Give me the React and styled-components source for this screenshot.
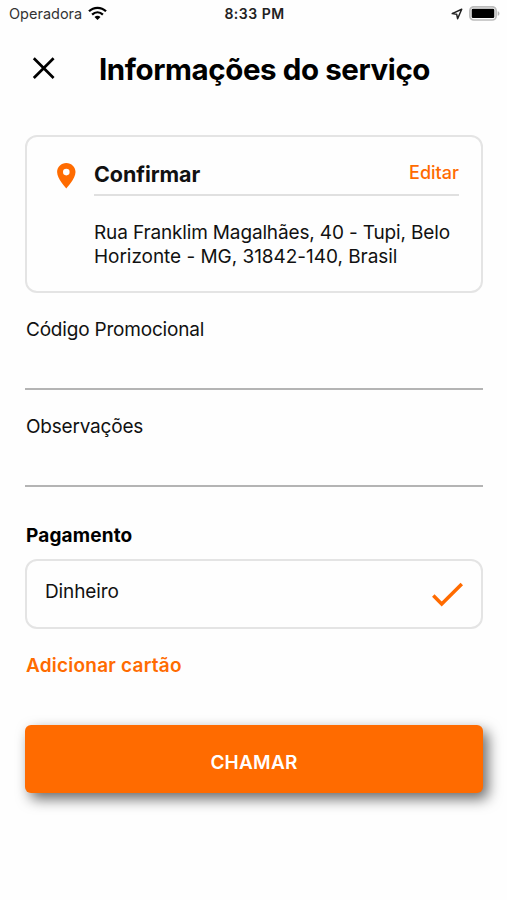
import React from 'react';
import styled, { createGlobalStyle } from 'styled-components';

const ORANGE = '#ff6b00';

const GlobalStyle = createGlobalStyle`
  * { box-sizing: border-box; }
  body { margin: 0; background: #fefefe; }
  button { border: 0; padding: 0; background: none; font: inherit; color: inherit; cursor: pointer; }
`;

const Screen = styled.main`
  width: 507px;
  height: 900px;
  overflow: hidden;
  background: #fefefe;
  color: #111;
  font-family: Inter, "Liberation Sans", sans-serif;
`;

const Text = styled.span`
  display: block;
  white-space: nowrap;
  font-size: ${(p) => p.$size}px;
  line-height: ${(p) => p.$line || 24}px;
  font-weight: ${(p) => p.$weight || 400};
  letter-spacing: ${(p) => p.$track || 0}px;
  color: ${(p) => p.$color || 'inherit'};
`;

const Title = styled(Text).attrs({ as: 'h1' })`
  margin: 0;
`;

const StatusBar = styled.div`
  display: grid;
  grid-template-columns: 1fr auto 1fr;
  align-items: center;
  height: 27px;
  padding: 0 7px 0 9px;
`;

const StatusGroup = styled.div`
  display: flex;
  align-items: center;
  gap: ${(p) => p.$gap}px;
  justify-content: ${(p) => (p.$end ? 'flex-end' : 'flex-start')};
`;

const Header = styled.header`
  display: flex;
  align-items: center;
  height: 83px;
  padding-left: 32px;
  gap: 43px;
`;

const CloseButton = styled.button`
  display: flex;
  width: 24px;
  height: 24px;
  margin-top: -2px;
`;

const Content = styled.section`
  padding: 25px 24px 0 25px;
`;

const AddressCard = styled.section`
  display: flex;
  height: 158px;
  padding: 25px 22px 0 29px;
  gap: 17px;
  border: 2px solid #e4e4e4;
  border-radius: 12px;
`;

const PinBox = styled.div`
  display: flex;
  flex: none;
  width: 21px;
  height: 27px;
`;

const AddressBody = styled.div`
  flex: 1;
`;

const AddressHead = styled.div`
  display: flex;
  justify-content: space-between;
  height: 34px;
  border-bottom: 2px solid #e0e0e0;
`;

const EditButton = styled.button`
  display: block;
  height: 20px;
`;

const AddressText = styled.div`
  padding-top: 25px;
`;

const Field = styled.label`
  display: block;
  height: 97px;
  padding-top: 25px;
`;

const FieldInput = styled.input`
  display: block;
  width: 100%;
  height: 48px;
  padding: 0;
  border: 0;
  border-bottom: 2px solid #b4b4b4;
  border-radius: 0;
  outline: 0;
  background: transparent;
  font: inherit;
`;

const Label = styled(Text)`
  padding-left: 1px;
`;

const PaymentTitle = styled.h2`
  margin: 0;
  padding: 37px 0 11px;
`;

const PaymentOption = styled.button`
  && {
    display: flex;
    justify-content: space-between;
    width: 100%;
    height: 70px;
    padding: 18px 17px 0 18px;
    border: 2px solid #e4e4e4;
    border-radius: 12px;
  }
`;

const CheckBox = styled.span`
  display: flex;
  width: 32px;
  height: 25px;
  margin-top: 3px;
`;

const AddCard = styled.button`
  display: block;
  margin-top: 25px;
`;

const SubmitButton = styled.button`
  && {
    display: flex;
    align-items: center;
    justify-content: center;
    width: 100%;
    height: 68px;
    margin-top: 47px;
    padding-top: 8px;
    border-radius: 6px;
    background: ${ORANGE};
    box-shadow: 5px 6px 14px rgba(0, 0, 0, 0.58);
  }
`;

const WifiIcon = () => (
  <svg width="19" height="15" viewBox="0 0 19 15" fill="none" stroke="#000" strokeWidth="2.3">
    <path d="M1 5.3C5.8.6 13.2.6 18 5.3" />
    <path d="M4.1 8.6c3.2-3 7.6-3 10.8 0" />
    <path d="M6.5 10.9c1.8-1.6 4.2-1.6 6 0L9.5 14z" fill="#000" stroke="none" />
  </svg>
);

const LocationIcon = () => (
  <svg width="12" height="12" viewBox="0 0 12 12" fill="none" stroke="#222" strokeWidth="1.5" strokeLinejoin="round">
    <path d="M10.7 1.3 1.2 5.6l4.5.7.9 4.4z" />
  </svg>
);

const BatteryIcon = () => (
  <svg width="31" height="15" viewBox="0 0 31 15">
    <rect x=".9" y=".8" width="26.2" height="13.2" rx="3.8" fill="#fff" stroke="#bcbcbc" strokeWidth="1.7" />
    <rect x="2.7" y="2.8" width="22.6" height="9.2" rx="1.3" fill="#000" />
    <path d="M28.7 5.2c2.3.6 2.3 4 0 4.6z" fill="#b5b5b5" />
  </svg>
);

const CloseIcon = () => (
  <svg width="24" height="24" viewBox="0 0 24 24" fill="none" stroke="#000" strokeWidth="2.7">
    <path d="M1.8 2.2 21.6 22M21.6 2.2 1.8 22" />
  </svg>
);

const PinIcon = () => (
  <svg width="21" height="27" viewBox="0 0 21 27">
    <path
      fill={ORANGE}
      fillRule="evenodd"
      d="M10.3.9C5.1.9 1.1 4.9 1.1 10.1c0 6.9 9.2 16.3 9.2 16.3s9.2-9.4 9.2-16.3C19.5 4.9 15.5.9 10.3.9zm0 5.9a3.3 3.3 0 1 1 0 6.6 3.3 3.3 0 0 1 0-6.6z"
    />
  </svg>
);

const CheckIcon = () => (
  <svg width="32" height="25" viewBox="0 0 32 25" fill="none" stroke={ORANGE} strokeWidth="3.5">
    <path d="M1.3 13.6 9.7 22 29.8 2.1" />
  </svg>
);

const FormField = ({ label }) => (
  <Field>
    <Label $size={19} $track={-0.2}>{label}</Label>
    <FieldInput aria-label={label} />
  </Field>
);

export default function App() {
  return (
    <>
      <GlobalStyle />
      <Screen>
        <StatusBar>
          <StatusGroup $gap={6}>
            <Text $size={14.5} $color="#333">Operadora</Text>
            <WifiIcon />
          </StatusGroup>
          <Text $size={14} $weight={600} $track={0.5} $color="#222">8:33 PM</Text>
          <StatusGroup $gap={6} $end>
            <LocationIcon />
            <BatteryIcon />
          </StatusGroup>
        </StatusBar>
        <Header>
          <CloseButton aria-label="Fechar"><CloseIcon /></CloseButton>
          <Title $size={29.5} $line={36} $weight={700} $track={-0.41} $color="#000">Informações do serviço</Title>
        </Header>
        <Content>
          <AddressCard>
            <PinBox><PinIcon /></PinBox>
            <AddressBody>
              <AddressHead>
                <Text $size={21.5} $line={25} $weight={700} $track={-0.08}>Confirmar</Text>
                <EditButton><Text $size={18} $line={19} $weight={500} $color={ORANGE}>Editar</Text></EditButton>
              </AddressHead>
              <AddressText>
                <Text $size={19} $line={23.5} $track={-0.15}>Rua Franklim Magalhães, 40 - Tupi, Belo</Text>
                <Text $size={19} $line={23.5} $track={-0.04}>Horizonte - MG, 31842-140, Brasil</Text>
              </AddressText>
            </AddressBody>
          </AddressCard>
          <FormField label="Código Promocional" />
          <FormField label="Observações" />
          <PaymentTitle><Label $size={19} $weight={700} $track={0.15} $color="#000">Pagamento</Label></PaymentTitle>
          <PaymentOption>
            <Text $size={19} $line={25} $track={-0.1}>Dinheiro</Text>
            <CheckBox><CheckIcon /></CheckBox>
          </PaymentOption>
          <AddCard><Label $size={19} $weight={600} $track={0.22} $color={ORANGE}>Adicionar cartão</Label></AddCard>
          <SubmitButton><Text $size={19} $weight={600} $track={0.25} $color="#fff">CHAMAR</Text></SubmitButton>
        </Content>
      </Screen>
    </>
  );
}
